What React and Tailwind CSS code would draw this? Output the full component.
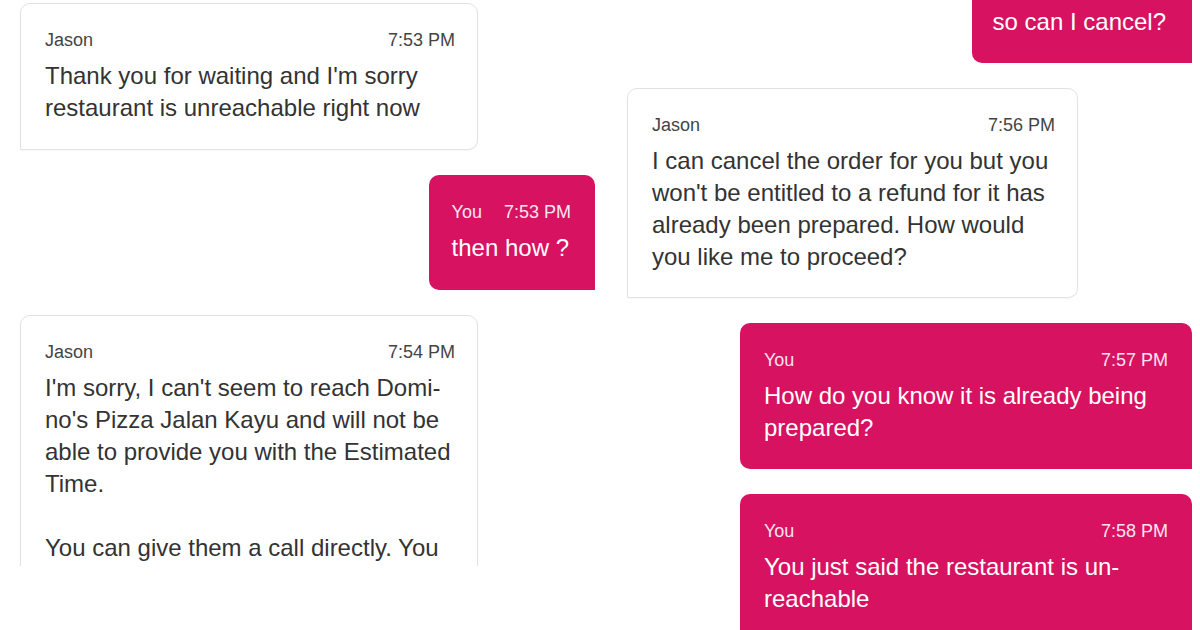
const Meta = ({ name, time, light, tight }) => (
  <div
    className={`flex h-5 items-center text-[18px] leading-5 ${tight ? 'gap-[22px]' : 'justify-between'} ${
      light ? 'text-[#fde4ee]' : 'text-[#444]'
    }`}
  >
    <span>{name}</span>
    <span>{time}</span>
  </div>
);

const Body = ({ lines }) => (
  <p className="mt-[10px] text-[24px] leading-8 whitespace-nowrap">
    {lines.map((l, i) => (
      <span key={i} className="block">
        {l === '' ? '\u00a0' : l}
      </span>
    ))}
  </p>
);

const Agent = ({ time, lines, className = '' }) => (
  <div
    className={`rounded-[10px] rounded-bl-none border border-[#e2e2e2] bg-white pt-[26px] pr-[22px] pl-[24px] text-[#333] shadow-[0_1px_2px_rgba(0,0,0,0.04)] ${className}`}
  >
    <Meta name="Jason" time={time} />
    <Body lines={lines} />
  </div>
);

const Mine = ({ time, lines, tight, className = '' }) => (
  <div
    className={`rounded-[10px] rounded-br-none bg-[#d61261] pt-[27px] pr-[24px] text-white ${className}`}
  >
    <Meta name="You" time={time} light tight={tight} />
    <Body lines={lines} />
  </div>
);

export default function App() {
  return (
    <div
      className="flex h-[630px] w-[1200px] overflow-hidden bg-white"
      style={{ fontFamily: '"Liberation Sans", Arial, sans-serif' }}
    >
      {/* left screenshot */}
      <div className="flex h-[566px] w-[600px] flex-col gap-[25px] overflow-hidden pt-[3px]">
        <Agent
          className="ml-[20px] w-[458px] shrink-0 pb-[25px]"
          time="7:53 PM"
          lines={["Thank you for waiting and I'm sorry", 'restaurant is unreachable right now']}
        />
        <Mine
          className="mr-[5px] self-end shrink-0 pb-[26px] pl-[23px]"
          tight
          time="7:53 PM"
          lines={['then how ?']}
        />
        <Agent
          className="ml-[20px] w-[458px] shrink-0 pb-[25px]"
          time="7:54 PM"
          lines={[
            "I'm sorry, I can't seem to reach Domi-",
            "no's Pizza Jalan Kayu and will not be",
            'able to provide you with the Estimated',
            'Time.',
            '',
            'You can give them a call directly. You',
          ]}
        />
      </div>

      {/* right screenshot */}
      <div className="flex h-[630px] w-[600px] flex-col gap-[25px] overflow-hidden">
        <div className="mr-[8px] self-end rounded-bl-[10px] bg-[#d61261] pt-[6px] pb-[25px] pr-[26px] pl-[21px] text-[24px] leading-8 text-white">
          so can I cancel?
        </div>
        <Agent
          className="ml-[27px] w-[451px] shrink-0 pb-[24px]"
          time="7:56 PM"
          lines={[
            'I can cancel the order for you but you',
            "won't be entitled to a refund for it has",
            'already been prepared. How would',
            'you like me to proceed?',
          ]}
        />
        <Mine
          className="mr-[8px] w-[452px] self-end shrink-0 pb-[25px] pl-[24px]"
          time="7:57 PM"
          lines={['How do you know it is already being', 'prepared?']}
        />
        <Mine
          className="mr-[8px] w-[452px] self-end shrink-0 pb-[25px] pl-[24px]"
          time="7:58 PM"
          lines={['You just said the restaurant is un-', 'reachable']}
        />
      </div>
    </div>
  );
}
